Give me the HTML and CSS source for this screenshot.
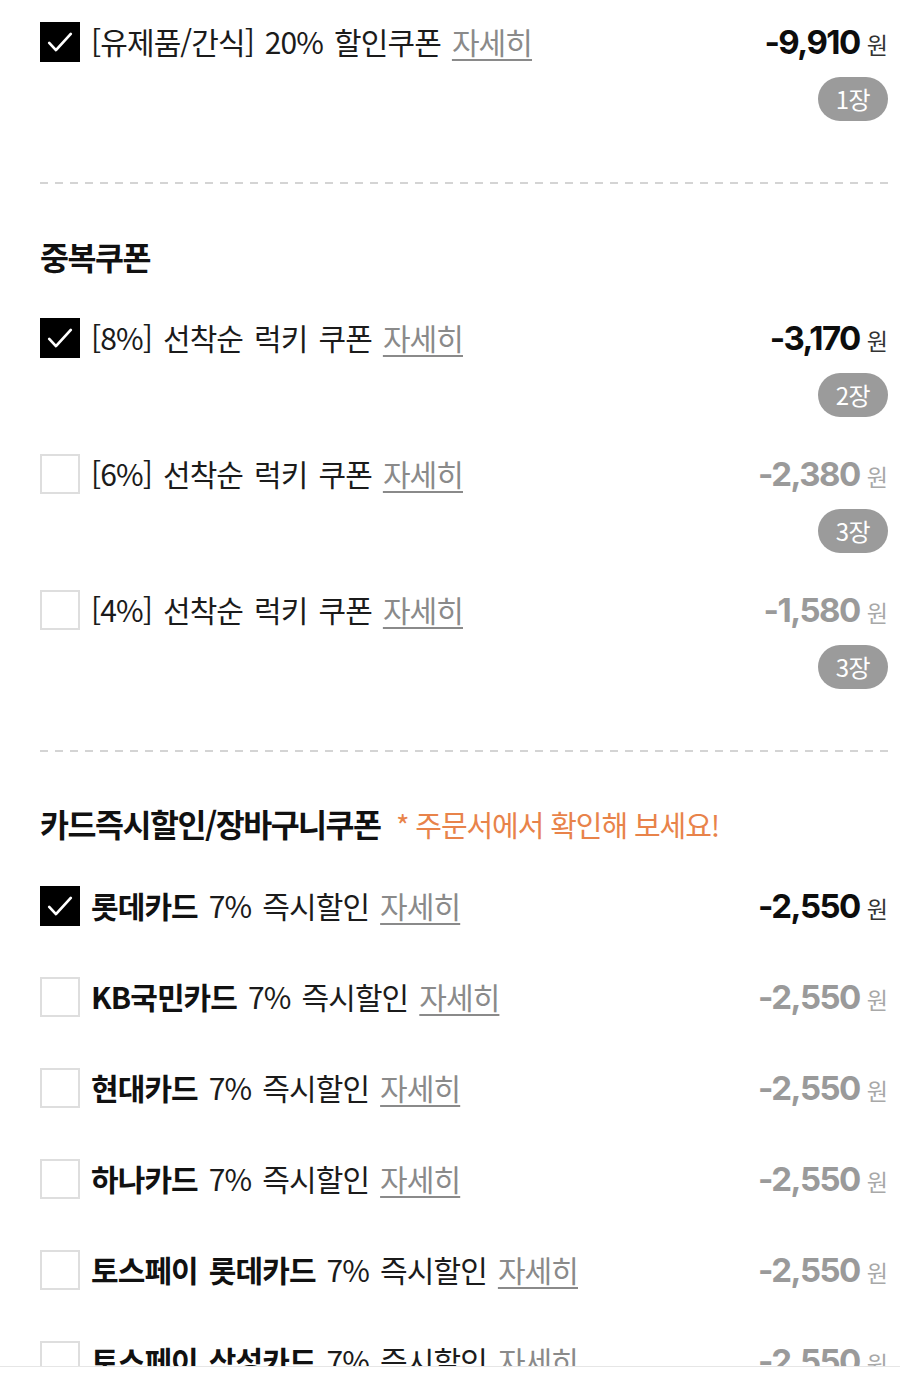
FILE: index.html
```html
<!DOCTYPE html>
<html lang="ko">
<head>
<meta charset="utf-8">
<link rel="stylesheet" href="styles.css">
</head>
<body>
<div class="page">
  <section class="sec sec-first">
    <div class="item">
      <div class="row">
        <div class="opt"><span class="cb on"><svg viewBox="0 0 40 40"><path d="M8 21 L15.5 29 L32 11"/></svg></span><span class="txt">[유제품/간식] 20% 할인쿠폰 <span class="more">자세히</span></span></div>
        <div class="price on"><b>-9,910</b><span class="won">원</span></div>
      </div>
      <div class="badge-row"><span class="badge">1장</span></div>
    </div>
  </section>
  <div class="divider"></div>
  <section class="sec sec-dup">
    <h2 class="head">중복쿠폰</h2>
    <div class="item">
      <div class="row">
        <div class="opt"><span class="cb on"><svg viewBox="0 0 40 40"><path d="M8 21 L15.5 29 L32 11"/></svg></span><span class="txt">[8%] 선착순 럭키 쿠폰 <span class="more">자세히</span></span></div>
        <div class="price on"><b>-3,170</b><span class="won">원</span></div>
      </div>
      <div class="badge-row"><span class="badge">2장</span></div>
    </div>
    <div class="item">
      <div class="row">
        <div class="opt"><span class="cb"></span><span class="txt">[6%] 선착순 럭키 쿠폰 <span class="more">자세히</span></span></div>
        <div class="price"><b>-2,380</b><span class="won">원</span></div>
      </div>
      <div class="badge-row"><span class="badge">3장</span></div>
    </div>
    <div class="item">
      <div class="row">
        <div class="opt"><span class="cb"></span><span class="txt">[4%] 선착순 럭키 쿠폰 <span class="more">자세히</span></span></div>
        <div class="price"><b>-1,580</b><span class="won">원</span></div>
      </div>
      <div class="badge-row"><span class="badge">3장</span></div>
    </div>
  </section>
  <div class="divider"></div>
  <section class="sec sec-card">
    <h2 class="head">카드즉시할인/장바구니쿠폰 <span class="note">* 주문서에서 확인해 보세요!</span></h2>
    <div class="cards">
      <div class="row">
        <div class="opt"><span class="cb on"><svg viewBox="0 0 40 40"><path d="M8 21 L15.5 29 L32 11"/></svg></span><span class="txt"><strong>롯데카드</strong> 7% 즉시할인 <span class="more">자세히</span></span></div>
        <div class="price on"><b>-2,550</b><span class="won">원</span></div>
      </div>
      <div class="row">
        <div class="opt"><span class="cb"></span><span class="txt"><strong>KB국민카드</strong> 7% 즉시할인 <span class="more">자세히</span></span></div>
        <div class="price"><b>-2,550</b><span class="won">원</span></div>
      </div>
      <div class="row">
        <div class="opt"><span class="cb"></span><span class="txt"><strong>현대카드</strong> 7% 즉시할인 <span class="more">자세히</span></span></div>
        <div class="price"><b>-2,550</b><span class="won">원</span></div>
      </div>
      <div class="row">
        <div class="opt"><span class="cb"></span><span class="txt"><strong>하나카드</strong> 7% 즉시할인 <span class="more">자세히</span></span></div>
        <div class="price"><b>-2,550</b><span class="won">원</span></div>
      </div>
      <div class="row">
        <div class="opt"><span class="cb"></span><span class="txt"><strong>토스페이 롯데카드</strong> 7% 즉시할인 <span class="more">자세히</span></span></div>
        <div class="price"><b>-2,550</b><span class="won">원</span></div>
      </div>
      <div class="row">
        <div class="opt"><span class="cb"></span><span class="txt"><strong>토스페이 삼성카드</strong> 7% 즉시할인 <span class="more">자세히</span></span></div>
        <div class="price"><b>-2,550</b><span class="won">원</span></div>
      </div>
    </div>
  </section>
</div>
<div class="bottom-bar"></div>
</body>
</html>
```
FILE: styles.css
```css
html, body {
  margin: 0;
  padding: 0;
  background: #fff;
  overflow: hidden;
  height: 1384px;
}
body {
  font-family: "Noto Sans CJK KR", "Noto Sans", sans-serif;
  color: #1b1b1b;
}
.page {
  padding: 0 12px 0 40px;
}
.sec-first {
  padding: 22px 0 61px;
}
.sec-dup {
  padding: 52px 0 61px;
}
.sec-card {
  padding: 51px 0 0;
}
.divider {
  height: 2px;
  background: repeating-linear-gradient(90deg, #d4d4d4 0 8px, transparent 8px 15px);
}
.head {
  margin: 0;
  height: 40px;
  line-height: 40px;
  font-size: 31.5px;
  font-weight: 700;
  letter-spacing: -1.5px;
  color: #111;
  white-space: nowrap;
}
.note {
  font-size: 29px;
  font-weight: 400;
  color: #e8834a;
  margin-left: 8px;
  letter-spacing: -1.1px;
}
.sec-dup .head {
  margin-bottom: 42px;
}
.sec-card .head {
  margin-bottom: 43px;
}
.item + .item {
  margin-top: 37px;
}
.row {
  display: flex;
  align-items: center;
  justify-content: space-between;
  height: 40px;
}
.cards {
  display: flex;
  flex-direction: column;
  gap: 51px;
}
.opt {
  display: flex;
  align-items: center;
  gap: 11px;
}
.cb {
  width: 40px;
  height: 40px;
  box-sizing: border-box;
  border: 2px solid #dedede;
  background: #fff;
  flex: none;
  display: flex;
}
.cb.on {
  background: #000;
  border-color: #000;
}
.cb svg {
  width: 36px;
  height: 36px;
}
.cb svg path {
  fill: none;
  stroke: #fff;
  stroke-width: 3;
  stroke-linecap: round;
  stroke-linejoin: round;
}
.txt {
  font-size: 30px;
  letter-spacing: -0.9px;
  word-spacing: 3.5px;
  line-height: 40px;
  white-space: nowrap;
  color: #1b1b1b;
  transform: translateY(-1px);
}
.txt strong {
  font-weight: 700;
  color: #111;
}
.more {
  color: #8a8a8a;
  text-decoration: underline;
  text-decoration-thickness: 2px;
  text-underline-offset: 5px;
}
.price {
  display: flex;
  align-items: baseline;
  gap: 7px;
  color: #9a9a9a;
}
.price b {
  font-family: "Inter", "Noto Sans CJK KR", sans-serif;
  font-size: 33px;
  font-weight: 700;
  letter-spacing: -1.5px;
}
.price .won {
  font-size: 23px;
  color: #a8a8a8;
}
.price.on {
  color: #0d0d0d;
}
.price.on .won {
  color: #333;
}
.badge-row {
  display: flex;
  justify-content: flex-end;
  margin-top: 15px;
}
.badge {
  width: 70px;
  height: 44px;
  border-radius: 22px;
  background: #9b9b9b;
  color: #fff;
  font-size: 24px;
  line-height: 44px;
  text-align: center;
  letter-spacing: -0.5px;
}
.bottom-bar {
  position: fixed;
  left: 0;
  right: 0;
  bottom: 0;
  height: 17px;
  background: #fff;
  border-top: 1px solid #e6e6e6;
}
```
